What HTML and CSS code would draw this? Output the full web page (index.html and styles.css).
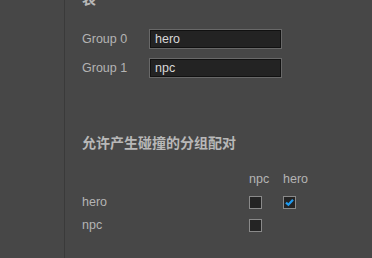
FILE: index.html
```html
<!DOCTYPE html>
<html>
<head>
<meta charset="utf-8">
<link rel="stylesheet" href="styles.css">
</head>
<body>
<div class="app">
  <div class="side"></div>
  <div class="main">
    <div class="title top">表</div>
    <div class="groups">
      <div class="grow"><span class="lbl">Group 0</span><div class="inp">hero</div></div>
      <div class="grow"><span class="lbl">Group 1</span><div class="inp">npc</div></div>
    </div>
    <div class="title sec">允许产生碰撞的分组配对</div>
    <div class="matrix">
      <div></div><div class="hd">npc</div><div class="hd">hero</div>
      <div class="lbl">hero</div><div><span class="cb"></span></div><div><span class="cb on"><svg width="11" height="11" viewBox="0 0 11 11"><path d="M2 5.6 L4.4 7.8 L9 2.8" fill="none" stroke="#1f9bf0" stroke-width="2.2"/></svg></span></div>
      <div class="lbl">npc</div><div><span class="cb"></span></div><div></div>
    </div>
  </div>
</div>
</body>
</html>
```
FILE: styles.css
```css
html, body { margin: 0; padding: 0; }
body { background: #474747; font-family: "Liberation Sans", Arial, sans-serif; width: 372px; height: 258px; overflow: hidden; }
.app { display: flex; height: 258px; }
.side { width: 64px; border-right: 1px solid #3a3a3a; flex: none; }
.main { padding-left: 17px; flex: 1; }
.title { font-family: "Noto Sans CJK SC", sans-serif; font-weight: bold; font-size: 14px; color: #b8b8b8; line-height: 16px; }
.top { margin-top: -10px; height: 16px; }
.groups { margin-top: 23px; display: flex; flex-direction: column; gap: 9px; }
.grow { display: flex; align-items: center; height: 20px; }
.lbl { color: #b4b4b4; font-size: 12.5px; width: 67px; }
.inp { box-sizing: border-box; width: 133px; height: 20px; border: 1px solid #686868; box-shadow: inset 0 0 0 1px #111; background: #232323; color: #d8d8d8; font-size: 12.5px; line-height: 18px; padding-left: 5px; }
.sec { margin-top: 56px; }
.matrix { margin-top: 23px; display: grid; grid-template-columns: 167px 34px 34px; grid-auto-rows: 13px; row-gap: 10px; align-items: center; }
.hd { color: #b4b4b4; font-size: 12.5px; line-height: 13px; }
.matrix .lbl { line-height: 13px; }
.cb { display: block; box-sizing: border-box; width: 13px; height: 13px; border: 1px solid #8a8a8a; background: #242424; position: relative; }
.cb svg { position: absolute; left: 0; top: 0; }
```
